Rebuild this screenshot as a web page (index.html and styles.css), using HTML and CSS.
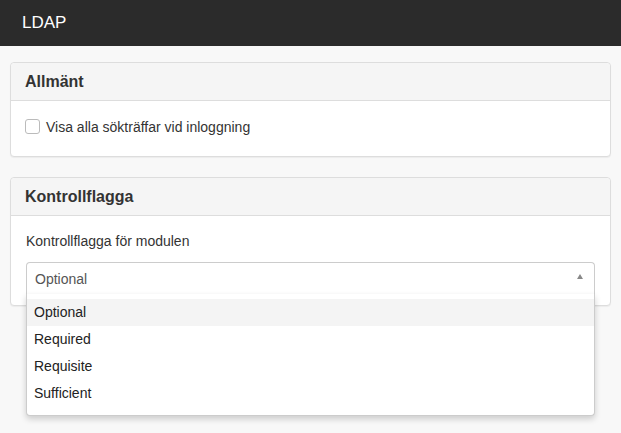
FILE: index.html
```html
<!DOCTYPE html>
<html lang="sv">
<head>
  <meta charset="UTF-8" />
  <meta name="viewport" content="width=device-width, initial-scale=1.0"/>
  <title>LDAP</title>
  <link rel="stylesheet" href="styles.css">
</head>
<body>
  <div class="navbar">
    <h1>LDAP</h1>
  </div>

  <div class="content">
    <div class="panel">
      <div class="panel-heading">Allmänt</div>
      <div class="panel-body compact">
        <label class="check">
          <span class="check-box"></span>
          Visa alla sökträffar vid inloggning
        </label>
      </div>
    </div>

    <div class="panel">
      <div class="panel-heading">Kontrollflagga</div>
      <div class="panel-body">
        <div class="field-label">Kontrollflagga för modulen</div>
        <div class="select open">
          <div class="select-value">
            Optional
            <span class="select-arrow"></span>
          </div>
          <!-- öppen lista under fältet -->
          <ul class="select-options">
            <li class="active">Optional</li>
            <li>Required</li>
            <li>Requisite</li>
            <li>Sufficient</li>
          </ul>
        </div>
      </div>
    </div>
  </div>
</body>
</html>
```

FILE: styles.css
```css
* { margin:0; padding:0; box-sizing:border-box; font-family:"Liberation Sans",Arial,sans-serif; }
html, body { min-height:100vh; }
body { background:#f8f8f8; color:#333; font-size:14px; }
.navbar {
  background:#2b2b2b;
  height:46px;
  padding:0 22px;
  display:flex;
  align-items:center;
}
.navbar h1 { color:white; font-size:17px; font-weight:normal; }
.content { padding:16px 10px; }
.panel {
  background:white;
  border:1px solid #ddd;
  border-radius:4px;
  box-shadow:0 1px 1px rgba(0,0,0,0.05);
  margin-bottom:20px;
}
.panel-heading {
  height:38px;
  padding:0 14px;
  background:#f5f5f5;
  border-bottom:1px solid #ddd;
  border-radius:4px 4px 0 0;
  display:flex;
  align-items:center;
  font-size:16px;
  font-weight:bold;
  color:#333;
}
.panel-body { padding:15px 15px 10px; }
.panel-body.compact { padding:13px 15px 17px 14px; }
.check {
  display:flex;
  align-items:center;
  gap:6px;
  height:25px;
  color:#333;
}
.check-box {
  width:15px; height:15px;
  border:1px solid #bbb;
  border-radius:3px;
  background:white;
}
.field-label { line-height:20px; margin-bottom:11px; color:#333; }
.select { position:relative; }
.select-value {
  height:33px;
  border:1px solid #ccc;
  border-radius:4px;
  padding:0 8px;
  display:flex;
  align-items:center;
  justify-content:space-between;
  color:#555;
  background:white;
}
.select.open .select-value { border-bottom-color:white; border-radius:4px 4px 0 0; }
.select-arrow {
  width:0; height:0;
  border-left:3px solid transparent;
  border-right:3px solid transparent;
  border-bottom:5px solid #888;
  margin-right:3px;
  margin-top:-5px;
}
.select-options {
  position:absolute;
  top:32px; left:0; right:0;
  list-style:none;
  background:white;
  border:1px solid #ccc;
  border-top:none;
  border-radius:0 0 4px 4px;
  box-shadow:0 3px 6px rgba(0,0,0,0.18);
  padding:5px 0 8px;
  z-index:10;
}
.select-options li {
  height:27px;
  line-height:27px;
  padding:0 7px;
  color:#222;
}
.select-options li.active { background:#f4f4f4; }
```
